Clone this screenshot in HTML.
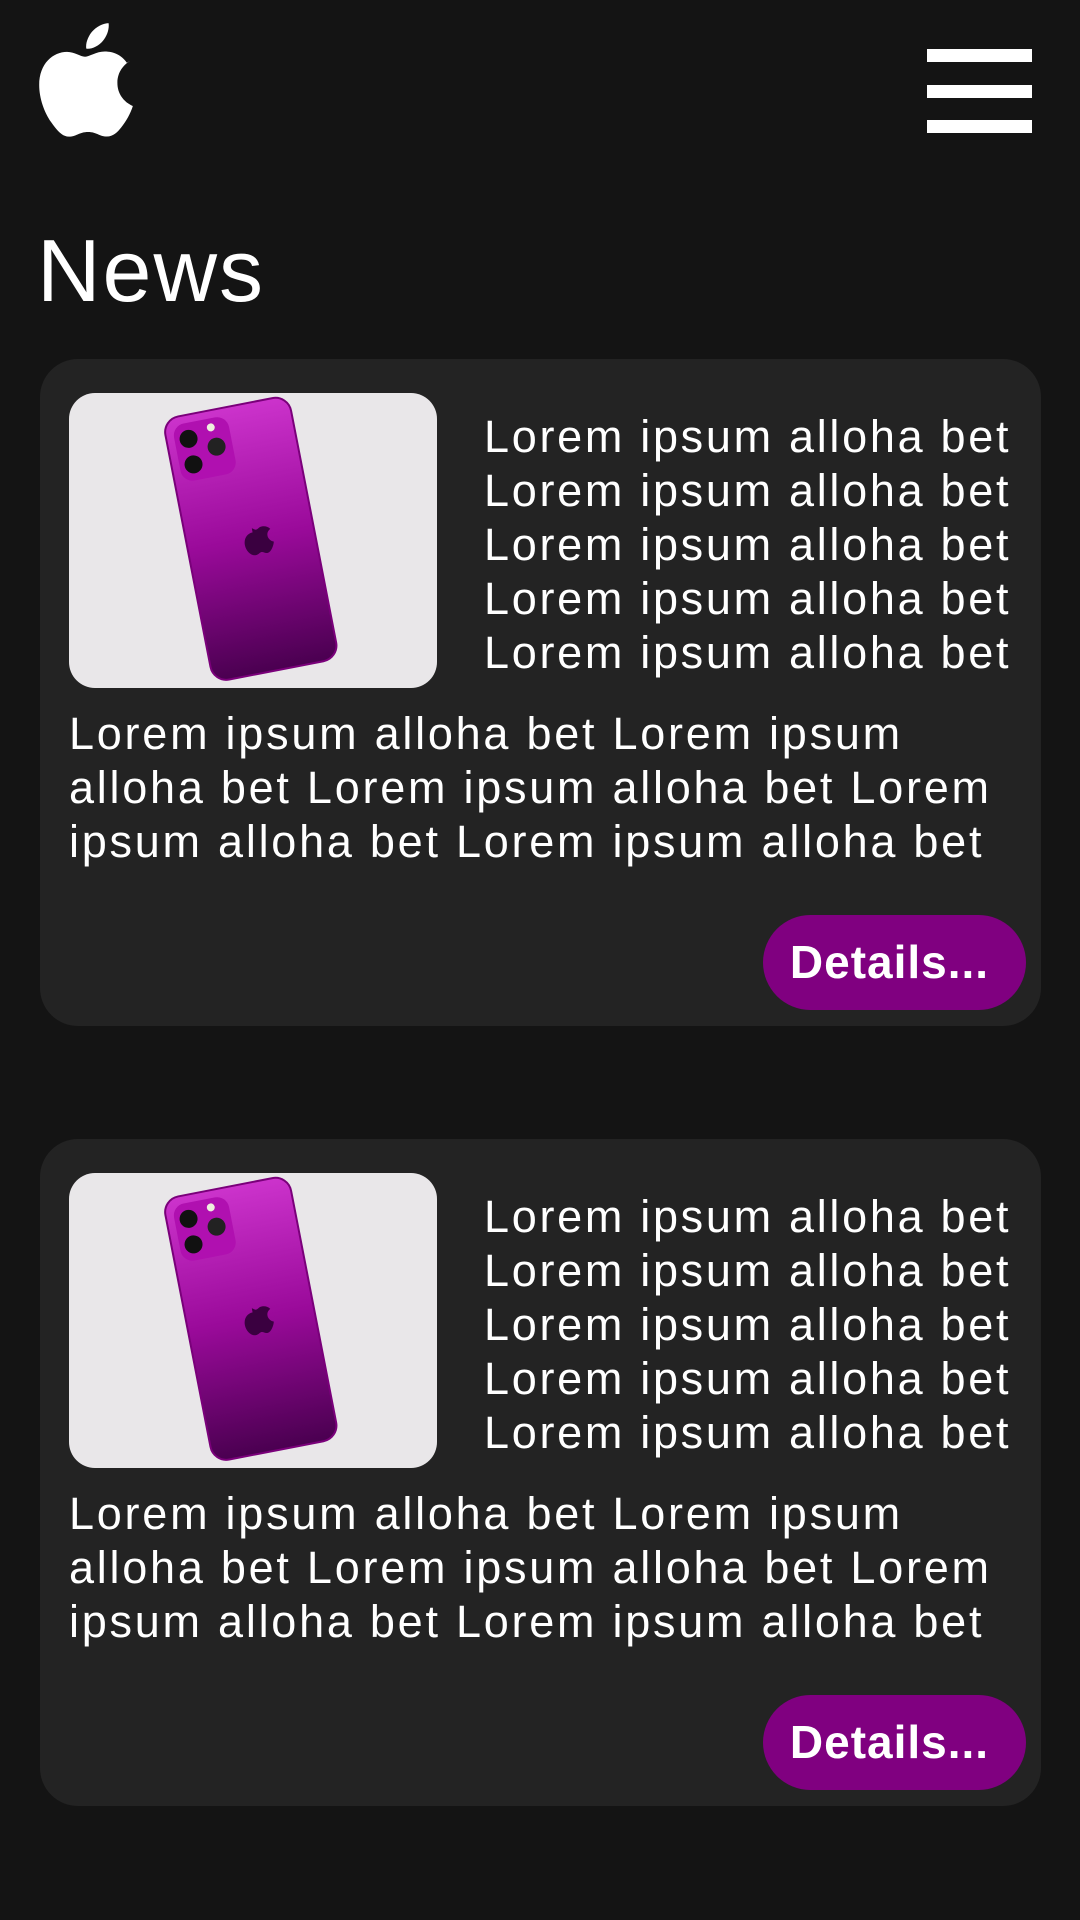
<!DOCTYPE html>
<html><head><meta charset="utf-8"><style>
body{margin:0;width:1080px;height:1920px;background:#141414;font-family:"Liberation Sans",sans-serif;color:#fff;position:relative;overflow:hidden}
.ham{position:absolute;left:927px;width:105px;height:13px;background:#fff}
.news{position:absolute;left:37px;top:220px;font-size:88px;font-weight:300;letter-spacing:2px}
.card{position:absolute;left:40px;width:1001px;height:667px;background:#232323;border-radius:38px 38px 38px 38px}
.img{position:absolute;left:29px;top:34px;width:368px;height:295px;background:#e9e7e9;border-radius:26px;overflow:hidden}
.rt{position:absolute;left:444px;top:51px;font-size:45px;line-height:54px;white-space:nowrap;letter-spacing:2.7px}
.bt{position:absolute;left:29px;top:348px;font-size:45px;line-height:54px;white-space:nowrap;letter-spacing:2.75px}
.btn{position:absolute;left:723px;top:556px;width:263px;height:95px;border-radius:48px;background:#800080;font-weight:bold;font-size:46px;line-height:95px;text-align:center;letter-spacing:1px;text-indent:-10px}
</style></head><body>
<svg style="position:absolute;left:37px;top:22px" width="98" height="115" viewBox="0 0 814 1000"><path fill="#fff" d="M788 340c-6 4-108 61-108 189 0 148 130 200 134 202-1 3-21 72-69 142-43 62-88 123-156 123s-86-40-164-40c-77 0-104 41-166 41s-106-57-156-127C45 788 0 665 0 548 0 360 122 260 242 260c64 0 117 42 157 42 38 0 98-45 171-45 28 0 127 3 192 97zM554 164c30-36 51-85 51-135 0-7-1-14-2-19-49 2-107 32-142 73-27 31-53 81-53 131 0 8 1 15 2 18 3 1 8 1 13 1 44 0 100-30 131-69z"/></svg>
<div class="ham" style="top:49px"></div><div class="ham" style="top:85px"></div><div class="ham" style="top:120px"></div>
<div class="news">News</div>

<div class="card" style="top:359px">
<div class="img"><svg width="368" height="295"><defs><linearGradient id="g" x1="0" y1="0" x2="0" y2="1"><stop offset="0" stop-color="#cc33cc"/><stop offset=".5" stop-color="#9a0a9a"/><stop offset="1" stop-color="#4a0050"/></linearGradient></defs><g transform="rotate(-11 181 147)"><rect x="118" y="12" width="128" height="268" rx="16" fill="url(#g)" stroke="#7a007a" stroke-width="2"/><rect x="126" y="20" width="56" height="58" rx="12" fill="#b010b0"/><circle cx="140" cy="36" r="9" fill="#111"/><circle cx="140" cy="62" r="9" fill="#111"/><circle cx="166" cy="49" r="9" fill="#222"/><circle cx="164" cy="29" r="4" fill="#eed"/><path d="M185 140c-6 0-10 5-10 11s4 12 9 12c3 0 4-2 6-2s3 2 6 2c4 0 8-8 8-10-3-1-5-4-5-7s2-5 4-6c-2-3-5-4-8-4s-4 2-6 2-3-2-4-2z" fill="#3a0040"/></g></svg></div>
<div class="rt">Lorem ipsum alloha bet<br>Lorem ipsum alloha bet<br>Lorem ipsum alloha bet<br>Lorem ipsum alloha bet<br>Lorem ipsum alloha bet</div>
<div class="bt">Lorem ipsum alloha bet Lorem ipsum<br>alloha bet Lorem ipsum alloha bet Lorem<br>ipsum alloha bet Lorem ipsum alloha bet</div>
<div class="btn">Details...</div>
</div>

<div class="card" style="top:1139px">
<div class="img"><svg width="368" height="295"><defs><linearGradient id="g2" x1="0" y1="0" x2="0" y2="1"><stop offset="0" stop-color="#cc33cc"/><stop offset=".5" stop-color="#9a0a9a"/><stop offset="1" stop-color="#4a0050"/></linearGradient></defs><g transform="rotate(-11 181 147)"><rect x="118" y="12" width="128" height="268" rx="16" fill="url(#g2)" stroke="#7a007a" stroke-width="2"/><rect x="126" y="20" width="56" height="58" rx="12" fill="#b010b0"/><circle cx="140" cy="36" r="9" fill="#111"/><circle cx="140" cy="62" r="9" fill="#111"/><circle cx="166" cy="49" r="9" fill="#222"/><circle cx="164" cy="29" r="4" fill="#eed"/><path d="M185 140c-6 0-10 5-10 11s4 12 9 12c3 0 4-2 6-2s3 2 6 2c4 0 8-8 8-10-3-1-5-4-5-7s2-5 4-6c-2-3-5-4-8-4s-4 2-6 2-3-2-4-2z" fill="#3a0040"/></g></svg></div>
<div class="rt">Lorem ipsum alloha bet<br>Lorem ipsum alloha bet<br>Lorem ipsum alloha bet<br>Lorem ipsum alloha bet<br>Lorem ipsum alloha bet</div>
<div class="bt">Lorem ipsum alloha bet Lorem ipsum<br>alloha bet Lorem ipsum alloha bet Lorem<br>ipsum alloha bet Lorem ipsum alloha bet</div>
<div class="btn">Details...</div>
</div>
</body></html>
